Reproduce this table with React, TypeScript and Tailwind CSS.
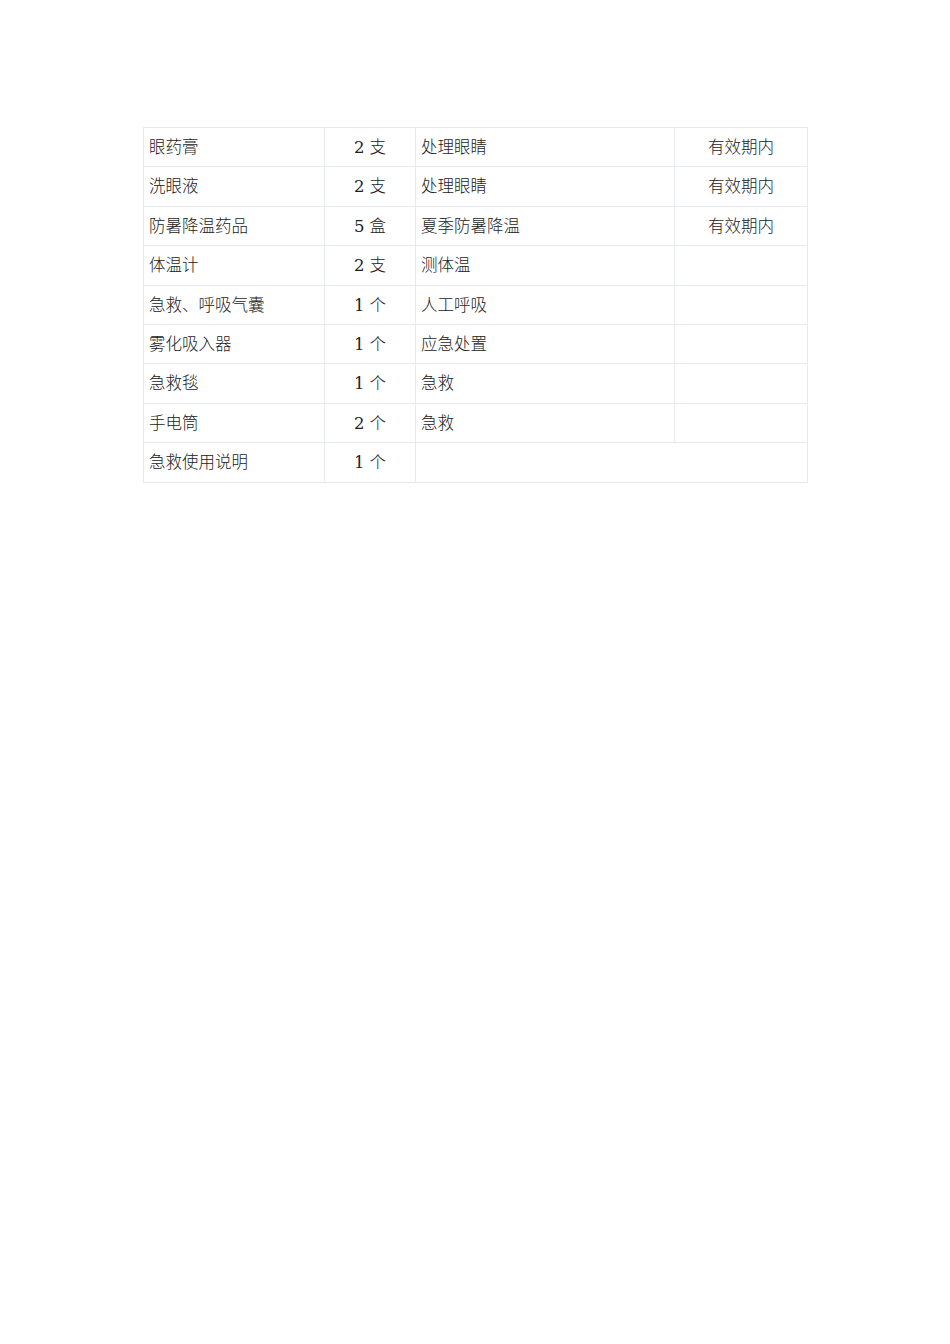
import React from "react";

interface Row {
  name: string;
  qty: string;
  use?: string;
  valid?: string;
}

const rows: Row[] = [
  { name: "眼药膏", qty: "2 支", use: "处理眼睛", valid: "有效期内" },
  { name: "洗眼液", qty: "2 支", use: "处理眼睛", valid: "有效期内" },
  { name: "防暑降温药品", qty: "5 盒", use: "夏季防暑降温", valid: "有效期内" },
  { name: "体温计", qty: "2 支", use: "测体温", valid: "" },
  { name: "急救、呼吸气囊", qty: "1 个", use: "人工呼吸", valid: "" },
  { name: "雾化吸入器", qty: "1 个", use: "应急处置", valid: "" },
  { name: "急救毯", qty: "1 个", use: "急救", valid: "" },
  { name: "手电筒", qty: "2 个", use: "急救", valid: "" },
  { name: "急救使用说明", qty: "1 个" },
];

const cell =
  "border border-[#e6eaf0] h-[39.4px] px-[5px] pt-[2px] text-[16.5px] font-light leading-none text-[#222]";

const App = () => {
  return (
    <div
      className="w-[950px] h-[1344px] bg-white pt-[127px] pl-[143px]"
      style={{ fontFamily: '"DejaVu Serif", "Noto Sans CJK SC", serif' }}
    >
      <table className="table-fixed border-collapse w-[664px]">
        <colgroup>
          <col className="w-[181px]" />
          <col className="w-[91px]" />
          <col className="w-[259px]" />
          <col className="w-[133px]" />
        </colgroup>
        <tbody>
          {rows.map((row, i) => (
            <tr key={i}>
              <td className={`${cell} text-left`}>{row.name}</td>
              <td className={`${cell} text-center`}>{row.qty}</td>
              {row.use === undefined ? (
                <td className={cell} colSpan={2}></td>
              ) : (
                <>
                  <td className={`${cell} text-left`}>{row.use}</td>
                  <td className={`${cell} text-center`}>{row.valid}</td>
                </>
              )}
            </tr>
          ))}
        </tbody>
      </table>
    </div>
  );
};

export default App;
